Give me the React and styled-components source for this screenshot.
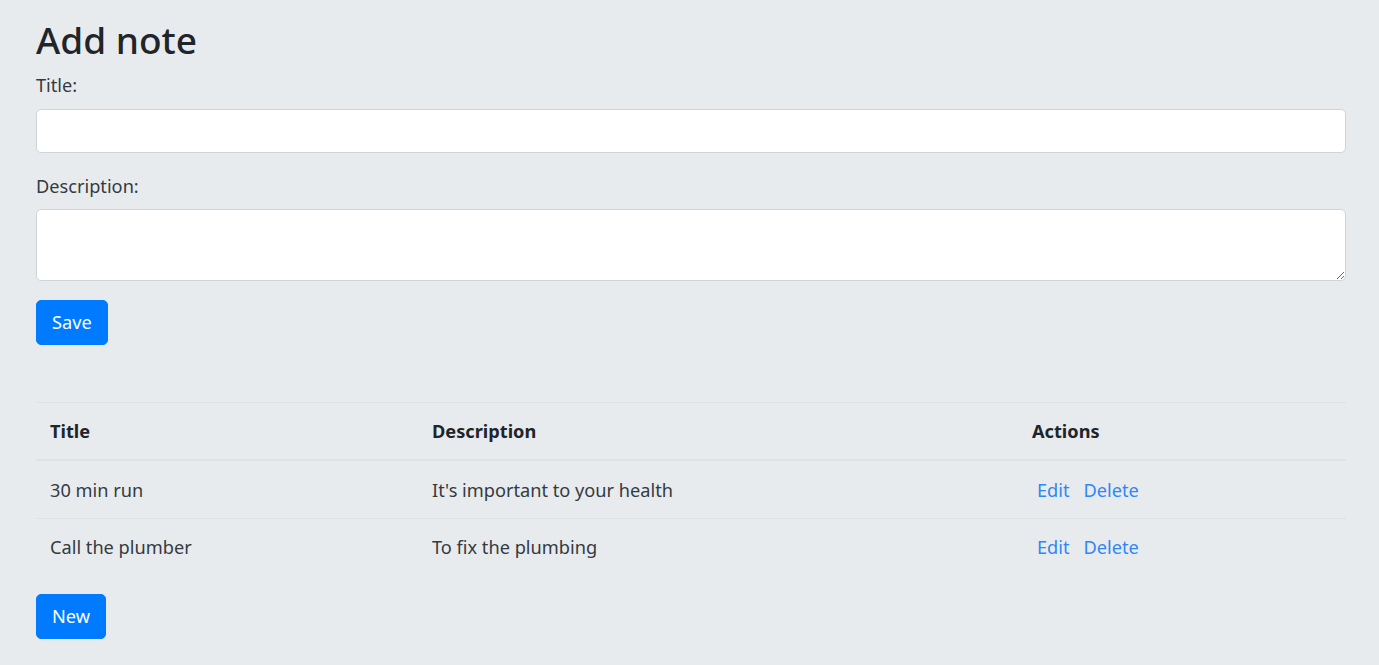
import React, { useState } from 'react';
import styled, { createGlobalStyle } from 'styled-components';

const GlobalStyle = createGlobalStyle`
  html, body {
    margin: 0;
    padding: 0;
    background: #e8ebee;
  }
  body {
    font-family: "Noto Sans", "Open Sans", sans-serif;
    font-size: 18.2px;
    line-height: 28.2px;
    color: #212529;
  }
  * { box-sizing: border-box; }
`;

const Page = styled.main`
  padding: 18px 33px 20px 36px;
`;

const Heading = styled.h2`
  margin: 0 0 9px;
  font-size: 37px;
  font-weight: 500;
  line-height: 1.2;
  color: #212529;
`;

const FormGroup = styled.div`
  margin-bottom: 19px;
`;

const Label = styled.label`
  display: block;
  margin-bottom: 9px;
  color: #343a40;
`;

const Input = styled.input`
  display: block;
  width: 100%;
  height: 44px;
  padding: 7px 14px;
  font: inherit;
  color: #495057;
  background: #fff;
  border: 1px solid #ced4da;
  border-radius: 5px;
  outline: none;
`;

const TextArea = styled.textarea`
  display: block;
  width: 100%;
  height: 72px;
  padding: 7px 14px;
  font: inherit;
  color: #495057;
  background: #fff;
  border: 1px solid #ced4da;
  border-radius: 5px;
  outline: none;
  resize: vertical;
`;

const Button = styled.button`
  display: inline-block;
  height: 45px;
  padding: 0 15px;
  font: inherit;
  color: #fff;
  background: #007bff;
  border: 1px solid #007bff;
  border-radius: 5px;
  cursor: pointer;
`;

const Table = styled.table`
  width: 100%;
  margin: 57px 0 18px;
  border-collapse: collapse;
  table-layout: fixed;

  th, td {
    padding: 14.2px 14px;
    text-align: left;
    vertical-align: top;
    border-top: 1px solid #dee2e6;
  }

  th {
    font-weight: 700;
    color: #212529;
  }

  thead th {
    border-bottom: 2px solid #dee2e6;
  }

  tbody tr:first-child td {
    border-top: none;
  }

  td {
    color: #343a40;
  }
`;

const LinkButton = styled.a`
  color: #2f86f6;
  text-decoration: none;
  cursor: pointer;
  margin-left: ${props => props.first ? '5px' : '14px'};
`;

const initialNotes = [
  { title: '30 min run', description: "It's important to your health" },
  { title: 'Call the plumber', description: 'To fix the plumbing' },
];

function App() {
  const [notes] = useState(initialNotes);

  const rows = notes.map((note, index) => <tr key={index}>
    <td>{note.title}</td>
    <td>{note.description}</td>
    <td>
      <LinkButton first>Edit</LinkButton>
      <LinkButton>Delete</LinkButton>
    </td>
  </tr>);

  return (
    <>
      <GlobalStyle />
      <Page>
        <Heading>Add note</Heading>
        <FormGroup>
          <Label htmlFor="title">Title:</Label>
          <Input id="title" type="text" />
        </FormGroup>
        <FormGroup>
          <Label htmlFor="description">Description:</Label>
          <TextArea id="description" />
        </FormGroup>
        <Button>Save</Button>
        <Table>
          <colgroup>
            <col style={{ width: '382px' }} />
            <col style={{ width: '600px' }} />
            <col />
          </colgroup>
          <thead>
            <tr>
              <th>Title</th>
              <th>Description</th>
              <th>Actions</th>
            </tr>
          </thead>
          <tbody>
            {rows}
          </tbody>
        </Table>
        <Button>New</Button>
      </Page>
    </>
  );
}

export default App;
